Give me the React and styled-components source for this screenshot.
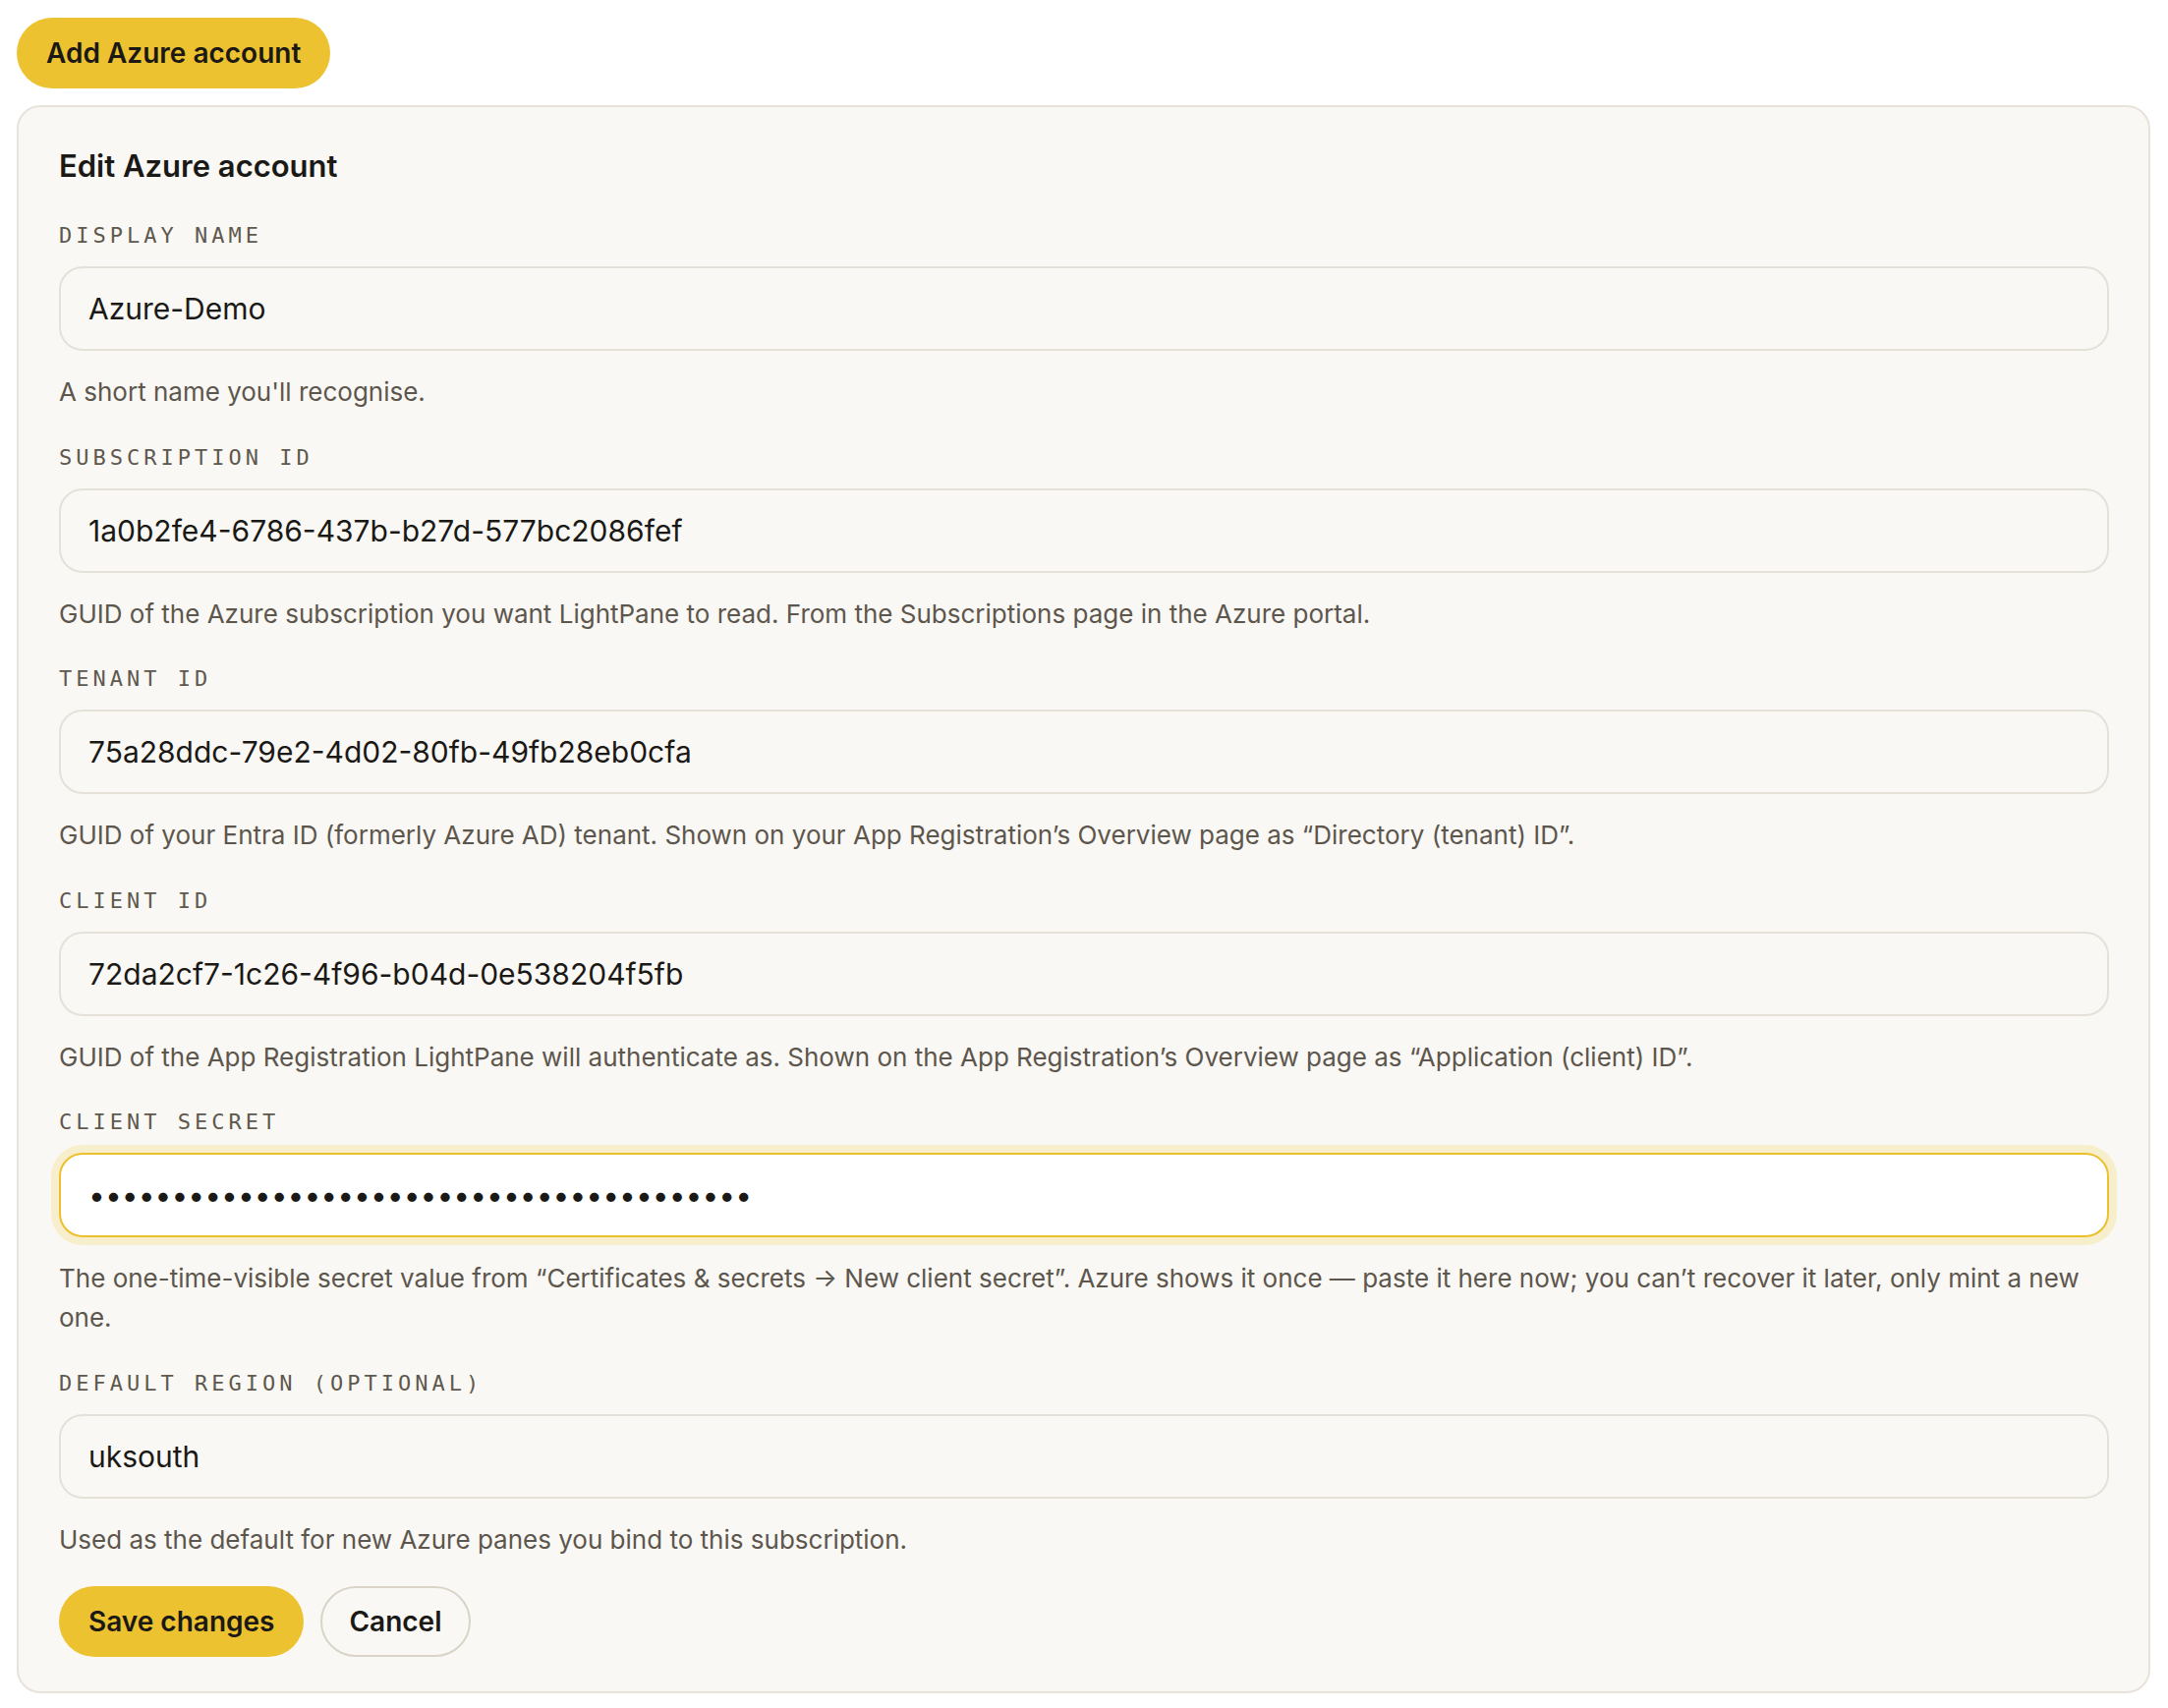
import React, { useEffect, useRef } from "react";
import styled, { createGlobalStyle, css } from "styled-components";

const GlobalStyle = createGlobalStyle`
  html, body {
    margin: 0;
    padding: 0;
    background: #ffffff;
  }
  body {
    font-family: Inter, "Noto Sans", "Liberation Sans", sans-serif;
    color: #1b1916;
    -webkit-font-smoothing: antialiased;
  }
  * { box-sizing: border-box; }
`;

const Page = styled.div`
  padding: 18px 18px 14px 17px;
  display: flex;
  flex-direction: column;
  align-items: flex-start;
  gap: 17px;
`;

const PillButton = styled.button`
  height: 72px;
  padding: 0 30px;
  border-radius: 36px;
  font-family: Inter, "Noto Sans", sans-serif;
  font-size: 28px;
  font-weight: 600;
  color: #1b1916;
  cursor: pointer;
  white-space: nowrap;
  ${(p) =>
    p.$variant === "ghost"
      ? css`
          background: transparent;
          border: 2px solid #dad4c8;
          padding: 0 27px;
        `
      : css`
          background: #edc230;
          border: none;
        `}
`;

const Card = styled.section`
  align-self: stretch;
  background: #f9f8f5;
  border: 2px solid #e7e3db;
  border-radius: 24px;
  padding: 40px 40px 35px 41px;
`;

const Title = styled.h2`
  margin: 0 0 38px;
  font-size: 31px;
  line-height: 40px;
  font-weight: 600;
  color: #1b1916;
`;

const Fields = styled.div`
  display: flex;
  flex-direction: column;
  gap: 33.5px;
`;

const Field = styled.div`
  display: flex;
  flex-direction: column;
`;

const Label = styled.label`
  font-family: "DejaVu Sans Mono", "Liberation Mono", monospace;
  font-size: 22px;
  line-height: 26px;
  letter-spacing: 4px;
  text-transform: uppercase;
  color: #5f584d;
  margin-bottom: 18px;
`;

const TextInput = styled.input`
  width: 100%;
  height: 86px;
  padding: 0 28px;
  border-radius: 24px;
  font-family: Inter, "Noto Sans", sans-serif;
  font-size: 30px;
  color: #1b1916;
  outline: none;
  caret-color: #1b1916;
  ${(p) =>
    p.$focused
      ? css`
          background: #ffffff;
          border: 2px solid #ecc02d;
          box-shadow: 0 0 0 8px #f7efcc;
        `
      : css`
          background: #f9f8f5;
          border: 2px solid #e5e1d9;
        `}
`;

const Help = styled.p`
  margin: 22px 0 0;
  font-size: 26px;
  line-height: 40px;
  color: #5d564c;
`;

const Actions = styled.div`
  margin-top: 27px;
  display: flex;
  gap: 17px;
`;

const fields = [
  {
    id: "name",
    label: "Display name",
    value: "Azure-Demo",
    help: "A short name you'll recognise.",
  },
  {
    id: "sub",
    label: "Subscription ID",
    value: "1a0b2fe4-6786-437b-b27d-577bc2086fef",
    help: "GUID of the Azure subscription you want LightPane to read. From the Subscriptions page in the Azure portal.",
  },
  {
    id: "tenant",
    label: "Tenant ID",
    value: "75a28ddc-79e2-4d02-80fb-49fb28eb0cfa",
    help: "GUID of your Entra ID (formerly Azure AD) tenant. Shown on your App Registration\u2019s Overview page as \u201CDirectory (tenant) ID\u201D.",
  },
  {
    id: "client",
    label: "Client ID",
    value: "72da2cf7-1c26-4f96-b04d-0e538204f5fb",
    help: "GUID of the App Registration LightPane will authenticate as. Shown on the App Registration\u2019s Overview page as \u201CApplication (client) ID\u201D.",
  },
  {
    id: "secret",
    label: "Client secret",
    value: "x".repeat(40),
    type: "password",
    focused: true,
    help: "The one-time-visible secret value from \u201CCertificates & secrets \u2192 New client secret\u201D. Azure shows it once \u2014 paste it here now; you can\u2019t recover it later, only mint a new one.",
  },
  {
    id: "region",
    label: "Default region (optional)",
    value: "uksouth",
    help: "Used as the default for new Azure panes you bind to this subscription.",
  },
];

export default function App() {
  const secretRef = useRef(null);

  useEffect(() => {
    const el = secretRef.current;
    if (el) {
      el.focus();
      const n = el.value.length;
      el.setSelectionRange(n, n);
    }
  }, []);

  return (
    <>
      <GlobalStyle />
      <Page>
        <PillButton type="button">Add Azure account</PillButton>
        <Card>
          <Title>Edit Azure account</Title>
          <Fields>
            {fields.map((f) => (
              <Field key={f.id}>
                <Label htmlFor={f.id}>{f.label}</Label>
                <TextInput
                  id={f.id}
                  type={f.type || "text"}
                  defaultValue={f.value}
                  $focused={f.focused}
                  ref={f.focused ? secretRef : undefined}
                  spellCheck={false}
                />
                <Help>{f.help}</Help>
              </Field>
            ))}
          </Fields>
          <Actions>
            <PillButton type="button">Save changes</PillButton>
            <PillButton type="button" $variant="ghost">
              Cancel
            </PillButton>
          </Actions>
        </Card>
      </Page>
    </>
  );
}
